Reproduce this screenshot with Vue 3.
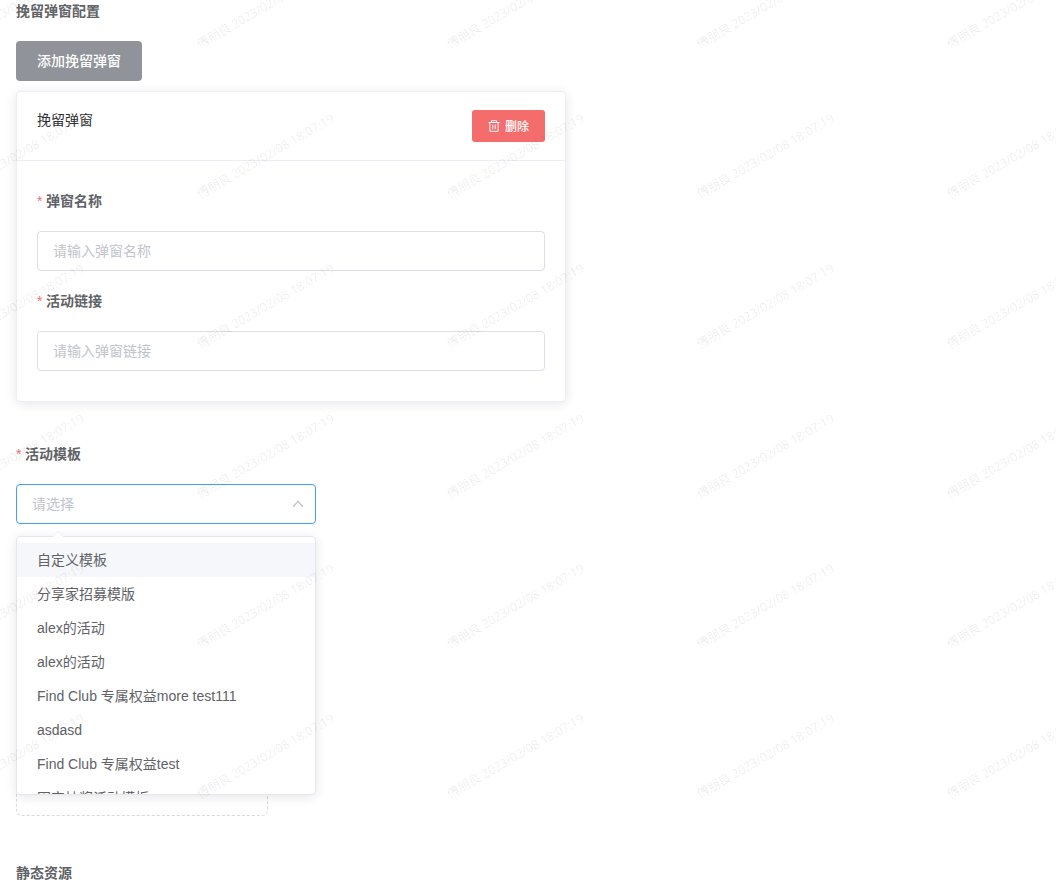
<script setup>
const options = [
  '自定义模板',
  '分享家招募模版',
  'alex的活动',
  'alex的活动',
  'Find Club 专属权益more test111',
  'asdasd',
  'Find Club 专属权益test',
  '固定抽奖活动模板',
]
</script>

<template>
  <div class="page">
    <h3 class="section-title">挽留弹窗配置</h3>
    <button class="btn add">添加挽留弹窗</button>

    <section class="card">
      <header class="card-header">
        <span class="card-title">挽留弹窗</span>
        <button class="btn danger">
          <svg class="trash" viewBox="0 0 12 12" fill="none" stroke="currentColor">
            <path d="M0.5 2.5H11.5M3.5 2.5V0.7H8.5V2.5M1.9 2.5V11.3H10.1V2.5M4.8 4.6V9.2M7.2 4.6V9.2" />
          </svg>
          <span>删除</span>
        </button>
      </header>
      <div class="card-body">
        <div class="field">
          <label class="label"><i>*</i>弹窗名称</label>
          <input class="input" placeholder="请输入弹窗名称" />
        </div>
        <div class="field">
          <label class="label"><i>*</i>活动链接</label>
          <input class="input" placeholder="请输入弹窗链接" />
        </div>
      </div>
    </section>

    <div class="template-field">
      <label class="label"><i>*</i>活动模板</label>
      <div class="select">
        <span>请选择</span>
        <svg class="arrow" viewBox="0 0 12 8" fill="none" stroke="currentColor" stroke-width="1.3">
          <path d="M1 6.7L6 1.5L11 6.7" />
        </svg>
        <div class="dropdown">
          <svg class="tip" viewBox="0 0 12 7"><path d="M0 6.5L6 0.5L12 6.5V7H0Z" fill="#fff" /><path d="M0 6.5L6 0.5L12 6.5" fill="none" stroke="#ebeef5" /></svg>
          <ul class="options">
            <li v-for="(name, i) in options" :key="i" :class="{ hover: i === 0 }">{{ name }}</li>
          </ul>
        </div>
      </div>
    </div>

    <div class="upload"></div>
    <h3 class="section-title last">静态资源</h3>

    <svg class="watermark" width="1056" height="885">
      <defs>
        <g id="mark">
          <text transform="rotate(-30)" textLength="156">傅朋良 2023/02/08 18:07:19</text>
        </g>
      </defs>
      <template v-for="r in 6" :key="r">
        <use v-for="c in 5" :key="c" href="#mark" :x="c * 250 - 300" :y="r * 150 - 101" />
      </template>
    </svg>
  </div>
</template>

<style>
body {
  margin: 0;
  background: #fff;
}
</style>

<style scoped>
.page {
  position: relative;
  box-sizing: border-box;
  width: 1056px;
  height: 885px;
  padding: 0 16px;
  overflow: hidden;
  background: #fff;
  color: #606266;
  font: 14px "Liberation Sans", "Noto Sans CJK SC", sans-serif;
}
.section-title {
  margin: 0 0 19px;
  font-size: 14px;
  font-weight: 700;
  line-height: 22px;
}
.btn {
  display: flex;
  align-items: center;
  justify-content: center;
  box-sizing: border-box;
  padding: 0;
  border: 0;
  color: #fff;
  font-family: inherit;
  font-weight: 500;
}
.add {
  width: 126px;
  height: 40px;
  padding-bottom: 2px;
  border-radius: 4px;
  background: #909399;
  font-size: 14px;
}
.card {
  box-sizing: border-box;
  width: 550px;
  margin-top: 10px;
  border: 1px solid #ebeef5;
  border-radius: 4px;
  background: #fff;
  box-shadow: 0 2px 12px rgba(0, 0, 0, 0.1);
}
.card-header {
  display: flex;
  justify-content: space-between;
  padding: 18px 20px;
  border-bottom: 1px solid #ebeef5;
}
.card-title {
  color: #303133;
  line-height: 20px;
}
.danger {
  gap: 5px;
  width: 73px;
  height: 32px;
  border-radius: 3px;
  background: #f56c6c;
  font-size: 12px;
}
.danger span {
  padding-bottom: 2px;
}
.trash {
  width: 12px;
  height: 12px;
}
.card-body {
  padding: 20px;
}
.field {
  margin-bottom: 10px;
}
.label {
  display: block;
  padding-bottom: 10px;
  font-weight: 700;
  line-height: 40px;
}
.label i {
  margin-right: 3.5px;
  color: #f56c6c;
  font-style: normal;
  font-weight: 400;
}
.input {
  display: block;
  box-sizing: border-box;
  width: 508px;
  height: 40px;
  padding: 0 15px;
  border: 1px solid #dcdfe6;
  border-radius: 4px;
  background: #fff;
  font: inherit;
  outline: none;
}
.input::placeholder {
  color: #c0c4cc;
  opacity: 1;
}
.template-field {
  margin-top: 32px;
}
.select {
  position: relative;
  display: flex;
  align-items: center;
  justify-content: space-between;
  box-sizing: border-box;
  width: 300px;
  height: 40px;
  padding: 0 11px 0 15px;
  border: 1px solid #409eff;
  border-radius: 4px;
  color: #c0c4cc;
}
.select > span {
  padding-bottom: 2px;
}
.arrow {
  width: 12px;
  height: 8px;
}
.dropdown {
  position: absolute;
  top: 51px;
  left: -1px;
  z-index: 2;
  box-sizing: border-box;
  width: 300px;
  height: 259px;
  border: 1px solid #e4e7ed;
  border-radius: 4px;
  background: #fff;
  box-shadow: 0 2px 12px rgba(0, 0, 0, 0.1);
  color: #606266;
}
.tip {
  position: absolute;
  top: -6px;
  left: 35px;
  width: 12px;
  height: 7px;
}
.options {
  box-sizing: border-box;
  height: 257px;
  margin: 0;
  padding: 6px 0 0;
  overflow: hidden;
  list-style: none;
}
.options li {
  height: 34px;
  padding: 0 20px;
  line-height: 34px;
}
.options .hover {
  background: #f5f7fa;
}
.upload {
  box-sizing: border-box;
  width: 252px;
  height: 252px;
  margin-top: 40px;
  border: 1px dashed #d9d9d9;
  border-radius: 6px;
}
.last {
  margin: 46px 0 0;
}
.watermark {
  position: absolute;
  top: 0;
  left: 0;
  z-index: 3;
  pointer-events: none;
}
.watermark text {
  fill: rgba(0, 0, 0, 0.08);
  font: 400 12.5px "Noto Sans", "Noto Sans CJK SC", sans-serif;
}
</style>
